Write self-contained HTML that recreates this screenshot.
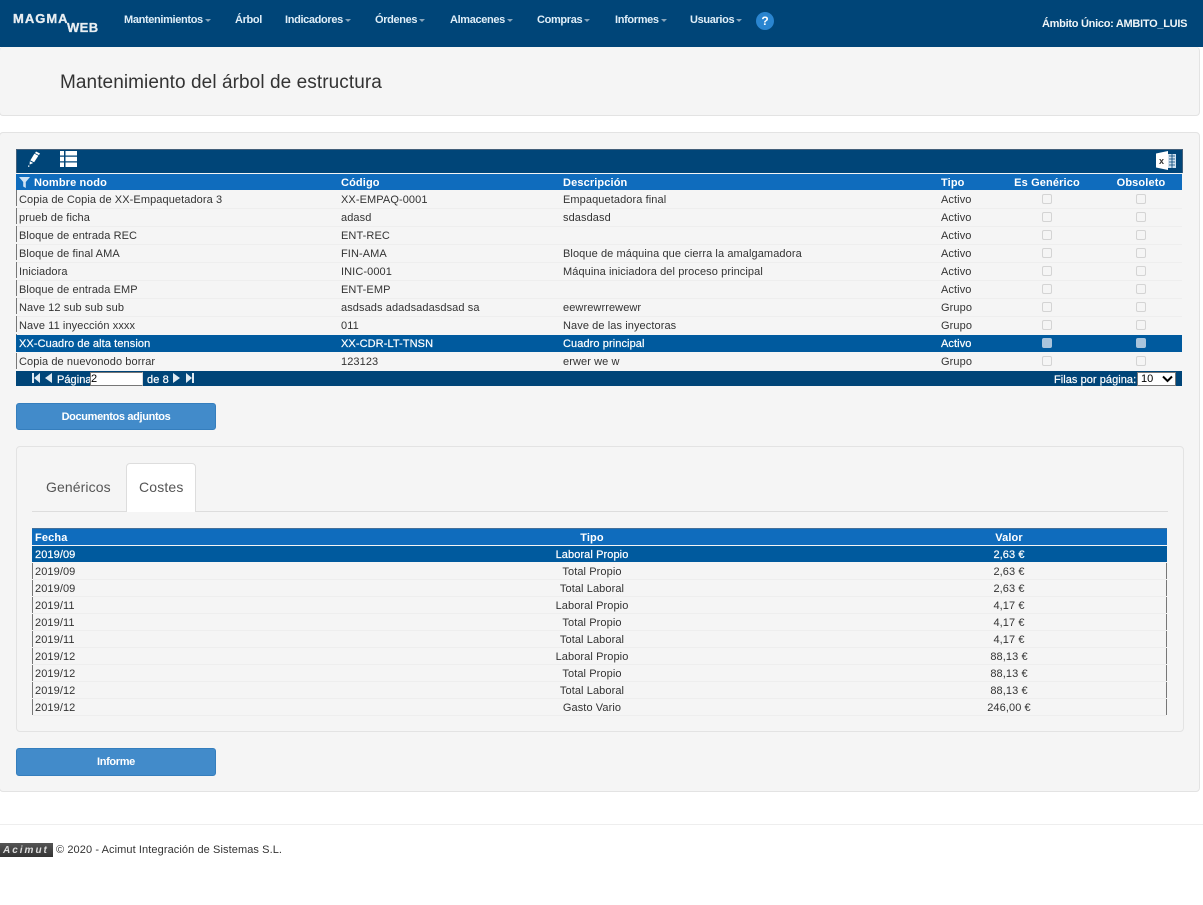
<!DOCTYPE html>
<html lang="es"><head><meta charset="utf-8"><title>Mantenimiento</title>
<style>
*{box-sizing:border-box}
html,body{margin:0;padding:0;background:#fff}
body{width:1203px;height:905px;position:relative;overflow:hidden;font-family:"Liberation Sans",Arial,sans-serif;font-size:11px;color:#333}
.a{position:absolute;white-space:nowrap}
.nav{left:0;top:0;width:1203px;height:47px;background:#004578}
.m{top:13px;margin-top:0;color:#dfeef8;font-size:11px;font-weight:bold;line-height:13px;letter-spacing:-.35px}
.m i{display:inline-block;width:0;height:0;border:3px solid transparent;border-top:3px solid #8aa6bb;border-bottom:0;margin-left:2px;vertical-align:1px}
.panel{background:#f5f5f5;border:1px solid #e3e3e3;border-radius:4px}
.t{margin-top:1px;line-height:18px;font-size:11px;letter-spacing:.09px;color:#333}
.h{color:#fff;font-weight:bold;letter-spacing:.13px}
.s{color:#fff;-webkit-text-stroke:.2px #fff}
.cb{width:10px;height:10px;border:1px solid #d4d4d4;border-radius:2px;background:#f5f5f5}
.btn{background:#428bca;border:1px solid #357ebd;border-radius:3px;color:#fff;font-weight:bold;text-align:center;font-size:11px;letter-spacing:-.35px}
.c{text-align:center}
.g{height:1px;background:#eee}
</style></head><body>

<div class="a nav"></div>
<div class="a" style="left:13px;top:11px;color:#e8eef2;font-size:13px;font-weight:bold;letter-spacing:1px;line-height:15px;-webkit-text-stroke:.3px #e8eef2">MAGMA</div>
<div class="a" style="left:67px;top:20px;color:#e8eef2;font-size:13px;font-weight:bold;letter-spacing:.4px;line-height:15px;-webkit-text-stroke:.3px #e8eef2">WEB</div>
<div class="a m" style="left:124px;top:14px">Mantenimientos<i></i></div>
<div class="a m" style="left:235px;top:14px">Árbol</div>
<div class="a m" style="left:285px;top:14px">Indicadores<i></i></div>
<div class="a m" style="left:375px;top:14px">Órdenes<i></i></div>
<div class="a m" style="left:450px;top:14px">Almacenes<i></i></div>
<div class="a m" style="left:537px;top:14px">Compras<i></i></div>
<div class="a m" style="left:615px;top:14px">Informes<i></i></div>
<div class="a m" style="left:690px;top:14px">Usuarios<i></i></div>
<div class="a" style="left:756px;top:12px;width:18px;height:18px;border-radius:50%;background:#2a85d0;color:#fff;font-weight:bold;font-size:12px;line-height:18px;text-align:center">?</div>
<div class="a" style="left:1042px;top:18px;color:#f0f5f8;font-size:11px;font-weight:bold;line-height:13px;letter-spacing:-.28px">Ámbito Único: AMBITO_LUIS</div>

<div class="a panel" style="left:-1px;top:47px;width:1201px;height:69px;border-top:0"></div>
<div class="a" style="left:60px;top:71px;font-size:19px;line-height:23px;color:#333;letter-spacing:.08px">Mantenimiento del árbol de estructura</div>

<div class="a panel" style="left:-1px;top:132px;width:1201px;height:660px"></div>

<!-- table 1 -->
<div class="a" style="left:16px;top:149px;width:1167px;height:24px;background:#004578;border:1px solid #44607a;border-bottom:0"></div>
<svg class="a" style="left:26px;top:150px" width="18" height="18" viewBox="0 0 18 18"><path d="M10 1.500l4 2-1 1.600-4-2zM8.400 3.600l4 2.200-4.300 6.400-3.800-1.800zM3.800 11.200l3.400 1.800-3.600 1.600zM2 15.500h1.400v1.200H2z" fill="#fff"/></svg>
<svg class="a" style="left:60px;top:151px" width="17" height="16" viewBox="0 0 17 16"><path d="M0 0h4v4.500H0zM5.500 0H17v4.500H5.500zM0 5.800h4v4.500H0zM5.500 5.800H17v4.500H5.500zM0 11.500h4V16H0zM5.500 11.500H17V16H5.500z" fill="#fff"/></svg>
<svg class="a" style="left:1156px;top:151px" width="20" height="19" viewBox="0 0 20 19"><path d="M12 3h8v14h-8z" fill="#cfe0ee"/><path d="M13 5h6M13 8h6M13 11h6M13 14h6M16 3v14" stroke="#004578" stroke-width=".8"/><path d="M0 2.500L12 0v19L0 16.500z" fill="#fff"/><text x="3" y="13" font-size="9" font-weight="bold" font-family="Liberation Sans,sans-serif" fill="#333">x</text></svg>

<div class="a" style="left:16px;top:174px;width:1166px;height:16px;background:#0f6cbd"></div>
<svg class="a" style="left:19px;top:177px" width="11" height="11" viewBox="0 0 11 11"><path d="M0 0h11L6.800 5v6L4.200 9.500V5z" fill="#cfe2f3"/></svg>
<div class="a t h" style="left:34px;top:173px">Nombre nodo</div>
<div class="a t h" style="left:341px;top:173px">Código</div>
<div class="a t h" style="left:563px;top:173px">Descripción</div>
<div class="a t h" style="left:941px;top:173px">Tipo</div>
<div class="a t h c" style="left:987px;top:173px;width:120px">Es Genérico</div>
<div class="a t h c" style="left:1081px;top:173px;width:120px">Obsoleto</div>

<div class="a" style="left:16px;top:335px;width:1166px;height:17px;background:#005a9e"></div>
<div class="a" style="left:16px;top:190px;width:1px;height:145px;background:repeating-linear-gradient(#777 0 16px,transparent 16px 18px)"></div>
<div class="a" style="left:16px;top:353px;width:1px;height:16px;background:#777"></div>
<div class="a g" style="left:17px;top:208px;width:1165px"></div>
<div class="a g" style="left:17px;top:226px;width:1165px"></div>
<div class="a g" style="left:17px;top:244px;width:1165px"></div>
<div class="a g" style="left:17px;top:262px;width:1165px"></div>
<div class="a g" style="left:17px;top:280px;width:1165px"></div>
<div class="a g" style="left:17px;top:298px;width:1165px"></div>
<div class="a g" style="left:17px;top:316px;width:1165px"></div>

<div class="a t" style="left:19px;top:190px">Copia de Copia de XX-Empaquetadora 3</div><div class="a t" style="left:341px;top:190px">XX-EMPAQ-0001</div><div class="a t" style="left:563px;top:190px">Empaquetadora final</div><div class="a t" style="left:941px;top:190px">Activo</div>
<div class="a t" style="left:19px;top:208px">prueb de ficha</div><div class="a t" style="left:341px;top:208px">adasd</div><div class="a t" style="left:563px;top:208px">sdasdasd</div><div class="a t" style="left:941px;top:208px">Activo</div>
<div class="a t" style="left:19px;top:226px">Bloque de entrada REC</div><div class="a t" style="left:341px;top:226px">ENT-REC</div><div class="a t" style="left:941px;top:226px">Activo</div>
<div class="a t" style="left:19px;top:244px">Bloque de final AMA</div><div class="a t" style="left:341px;top:244px">FIN-AMA</div><div class="a t" style="left:563px;top:244px">Bloque de máquina que cierra la amalgamadora</div><div class="a t" style="left:941px;top:244px">Activo</div>
<div class="a t" style="left:19px;top:262px">Iniciadora</div><div class="a t" style="left:341px;top:262px">INIC-0001</div><div class="a t" style="left:563px;top:262px">Máquina iniciadora del proceso principal</div><div class="a t" style="left:941px;top:262px">Activo</div>
<div class="a t" style="left:19px;top:280px">Bloque de entrada EMP</div><div class="a t" style="left:341px;top:280px">ENT-EMP</div><div class="a t" style="left:941px;top:280px">Activo</div>
<div class="a t" style="left:19px;top:298px">Nave 12 sub sub sub</div><div class="a t" style="left:341px;top:298px">asdsads adadsadasdsad sa</div><div class="a t" style="left:563px;top:298px">eewrewrrewewr</div><div class="a t" style="left:941px;top:298px">Grupo</div>
<div class="a t" style="left:19px;top:316px">Nave 11 inyección xxxx</div><div class="a t" style="left:341px;top:316px">011</div><div class="a t" style="left:563px;top:316px">Nave de las inyectoras</div><div class="a t" style="left:941px;top:316px">Grupo</div>
<div class="a t s" style="left:19px;top:334px">XX-Cuadro de alta tension</div><div class="a t s" style="left:341px;top:334px">XX-CDR-LT-TNSN</div><div class="a t s" style="left:563px;top:334px">Cuadro principal</div><div class="a t s" style="left:941px;top:334px">Activo</div>
<div class="a t" style="left:19px;top:352px">Copia de nuevonodo borrar</div><div class="a t" style="left:341px;top:352px">123123</div><div class="a t" style="left:563px;top:352px">erwer we w</div><div class="a t" style="left:941px;top:352px">Grupo</div>

<div class="a cb" style="left:1042px;top:194px"></div><div class="a cb" style="left:1136px;top:194px"></div>
<div class="a cb" style="left:1042px;top:212px"></div><div class="a cb" style="left:1136px;top:212px"></div>
<div class="a cb" style="left:1042px;top:230px"></div><div class="a cb" style="left:1136px;top:230px"></div>
<div class="a cb" style="left:1042px;top:248px"></div><div class="a cb" style="left:1136px;top:248px"></div>
<div class="a cb" style="left:1042px;top:266px"></div><div class="a cb" style="left:1136px;top:266px"></div>
<div class="a cb" style="left:1042px;top:284px"></div><div class="a cb" style="left:1136px;top:284px"></div>
<div class="a cb" style="left:1042px;top:302px"></div><div class="a cb" style="left:1136px;top:302px"></div>
<div class="a cb" style="left:1042px;top:320px"></div><div class="a cb" style="left:1136px;top:320px"></div>
<div class="a cb" style="left:1042px;top:338px;background:#a9c4dc;border-color:#a9c4dc"></div><div class="a cb" style="left:1136px;top:338px;background:#a9c4dc;border-color:#a9c4dc"></div>
<div class="a cb" style="left:1042px;top:356px"></div><div class="a cb" style="left:1136px;top:356px"></div>

<!-- pager -->
<div class="a" style="left:16px;top:371px;width:1166px;height:15px;background:#004578"></div>
<svg class="a" style="left:32px;top:373px" width="22" height="10" viewBox="0 0 22 10"><path d="M0 0h2v10H0zM2 5l6-5v10zM13 5l7-5v10z" fill="#dfeaf2"/></svg>
<div class="a" style="left:57px;top:373px;line-height:14px;color:#fff;letter-spacing:.05px;-webkit-text-stroke:.2px #fff">Página</div>
<div class="a" style="left:90px;top:372px;width:53px;height:14px;background:#fff;border:1px solid #777;border-right-color:#ddd;color:#000;line-height:12px;padding-left:0">2</div>
<div class="a" style="left:147px;top:373px;line-height:14px;color:#fff;letter-spacing:.1px;-webkit-text-stroke:.2px #fff">de 8</div>
<svg class="a" style="left:172px;top:373px" width="22" height="10" viewBox="0 0 22 10"><path d="M1 0l7 5-7 5zM14 0l6 5-6 5zM20 0h2v10h-2z" fill="#dfeaf2"/></svg>
<div class="a" style="left:1054px;top:373px;line-height:14px;color:#fff;letter-spacing:.05px;-webkit-text-stroke:.2px #fff">Filas por página:</div>
<div class="a" style="left:1137px;top:372px;width:39px;height:14px;background:#fff;border:1px solid #777;color:#000;line-height:12px;padding-left:3px;font-size:11px">10</div>
<svg class="a" style="left:1162px;top:375px" width="11" height="8" viewBox="0 0 11 8"><path d="M1 1.500l4.500 4.500L10 1.500" fill="none" stroke="#000" stroke-width="2"/></svg>

<div class="a btn" style="left:16px;top:403px;width:200px;height:27px;line-height:27px">Documentos adjuntos</div>

<!-- inner panel -->
<div class="a panel" style="left:16px;top:446px;width:1168px;height:286px"></div>
<div class="a" style="left:32px;top:511px;width:1136px;height:1px;background:#ddd"></div>
<div class="a" style="left:46px;top:478px;font-size:14px;line-height:18px;color:#555;letter-spacing:.1px">Genéricos</div>
<div class="a" style="left:126px;top:463px;width:70px;height:49px;background:#fff;border:1px solid #ddd;border-bottom:0;border-radius:4px 4px 0 0"></div>
<div class="a" style="left:139px;top:478px;font-size:14px;line-height:18px;color:#555;letter-spacing:.15px">Costes</div>

<!-- table 2 -->
<div class="a" style="left:32px;top:528px;width:1135px;height:17px;background:#0f6cbd;border-top:1px solid #44709a"></div>
<div class="a" style="left:32px;top:546px;width:1135px;height:16px;background:#005a9e"></div>
<div class="a t h" style="left:35px;top:528px">Fecha</div>
<div class="a t h c" style="left:532px;top:528px;width:120px">Tipo</div>
<div class="a t h c" style="left:949px;top:528px;width:120px">Valor</div>

<div class="a" style="left:32px;top:563px;width:1px;height:153px;background:repeating-linear-gradient(#777 0 16px,transparent 16px 17px)"></div>
<div class="a" style="left:1166px;top:563px;width:1px;height:153px;background:repeating-linear-gradient(#777 0 16px,transparent 16px 17px)"></div>
<div class="a g" style="left:33px;top:579px;width:1133px"></div>
<div class="a g" style="left:33px;top:596px;width:1133px"></div>
<div class="a g" style="left:33px;top:613px;width:1133px"></div>
<div class="a g" style="left:33px;top:630px;width:1133px"></div>
<div class="a g" style="left:33px;top:647px;width:1133px"></div>
<div class="a g" style="left:33px;top:664px;width:1133px"></div>
<div class="a g" style="left:33px;top:681px;width:1133px"></div>
<div class="a g" style="left:33px;top:698px;width:1133px"></div>
<div class="a g" style="left:33px;top:715px;width:1133px"></div>

<div class="a t s" style="left:35px;top:545px">2019/09</div><div class="a t c s" style="left:492px;top:545px;width:200px">Laboral Propio</div><div class="a t c s" style="left:909px;top:545px;width:200px">2,63 €</div>
<div class="a t" style="left:35px;top:562px">2019/09</div><div class="a t c" style="left:492px;top:562px;width:200px">Total Propio</div><div class="a t c" style="left:909px;top:562px;width:200px">2,63 €</div>
<div class="a t" style="left:35px;top:579px">2019/09</div><div class="a t c" style="left:492px;top:579px;width:200px">Total Laboral</div><div class="a t c" style="left:909px;top:579px;width:200px">2,63 €</div>
<div class="a t" style="left:35px;top:596px">2019/11</div><div class="a t c" style="left:492px;top:596px;width:200px">Laboral Propio</div><div class="a t c" style="left:909px;top:596px;width:200px">4,17 €</div>
<div class="a t" style="left:35px;top:613px">2019/11</div><div class="a t c" style="left:492px;top:613px;width:200px">Total Propio</div><div class="a t c" style="left:909px;top:613px;width:200px">4,17 €</div>
<div class="a t" style="left:35px;top:630px">2019/11</div><div class="a t c" style="left:492px;top:630px;width:200px">Total Laboral</div><div class="a t c" style="left:909px;top:630px;width:200px">4,17 €</div>
<div class="a t" style="left:35px;top:647px">2019/12</div><div class="a t c" style="left:492px;top:647px;width:200px">Laboral Propio</div><div class="a t c" style="left:909px;top:647px;width:200px">88,13 €</div>
<div class="a t" style="left:35px;top:664px">2019/12</div><div class="a t c" style="left:492px;top:664px;width:200px">Total Propio</div><div class="a t c" style="left:909px;top:664px;width:200px">88,13 €</div>
<div class="a t" style="left:35px;top:681px">2019/12</div><div class="a t c" style="left:492px;top:681px;width:200px">Total Laboral</div><div class="a t c" style="left:909px;top:681px;width:200px">88,13 €</div>
<div class="a t" style="left:35px;top:698px">2019/12</div><div class="a t c" style="left:492px;top:698px;width:200px">Gasto Vario</div><div class="a t c" style="left:909px;top:698px;width:200px">246,00 €</div>

<div class="a btn" style="left:16px;top:748px;width:200px;height:28px;line-height:27px">Informe</div>

<!-- footer -->
<div class="a" style="left:0;top:824px;width:1203px;height:1px;background:#eee"></div>
<div class="a" style="left:0;top:843px;width:53px;height:14px;background:linear-gradient(#555,#333);color:#ddd;font:italic bold 10px/15px 'Liberation Sans',sans-serif;padding-left:3px;letter-spacing:2px">Acimut</div>
<div class="a" style="left:56px;top:843px;line-height:14px;letter-spacing:.09px;color:#333">© 2020 - Acimut Integración de Sistemas S.L.</div>
</body></html>
